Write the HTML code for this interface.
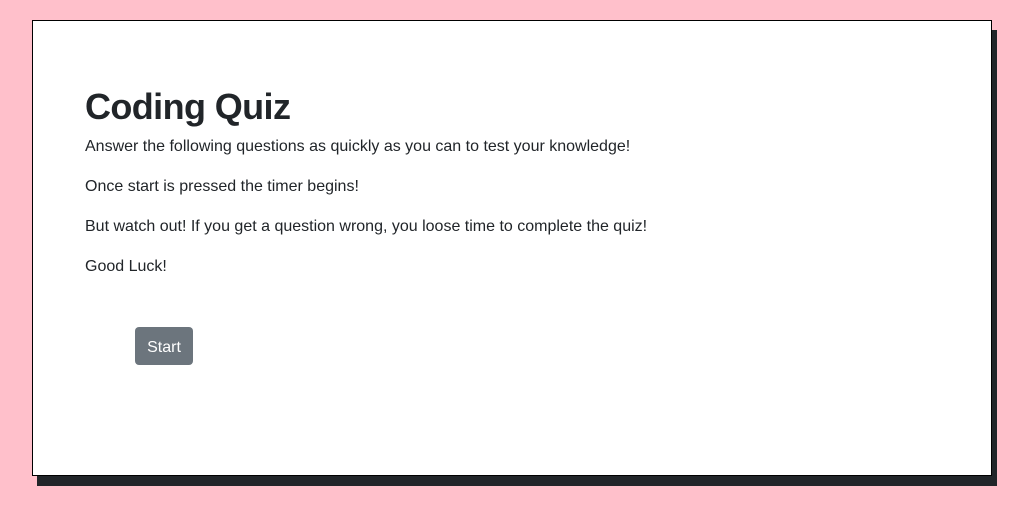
<!DOCTYPE html>
<html><head><style>
html,body{margin:0;padding:0}
body{width:1016px;height:511px;background:#ffc0cb;position:relative;overflow:hidden;font-family:"Liberation Sans",sans-serif;color:#212529}
.sh{position:absolute;left:37px;top:30px;width:960px;height:456px;background:#212529}
.box{position:absolute;left:32px;top:20px;width:958px;height:454px;background:#fff;border:1px solid #000}
h1{position:absolute;left:52px;top:63px;margin:0;font-size:36px;font-weight:bold;line-height:46px;letter-spacing:-0.6px}
p{position:absolute;left:52px;margin:0;font-size:16px;line-height:24px}
.btn{position:absolute;left:102px;top:306px;width:58px;height:38px;background:#6c757d;color:#fff;border-radius:4px;font-size:16px;line-height:42px;text-align:center}
</style></head><body>
<div class="sh"></div>
<div class="box">
<h1>Coding Quiz</h1>
<p style="top:114px">Answer the following questions as quickly as you can to test your knowledge!</p>
<p style="top:154px">Once start is pressed the timer begins!</p>
<p style="top:194px">But watch out! If you get a question wrong, you loose time to complete the quiz!</p>
<p style="top:234px">Good Luck!</p>
<div class="btn">Start</div>
</div>
</body></html>
